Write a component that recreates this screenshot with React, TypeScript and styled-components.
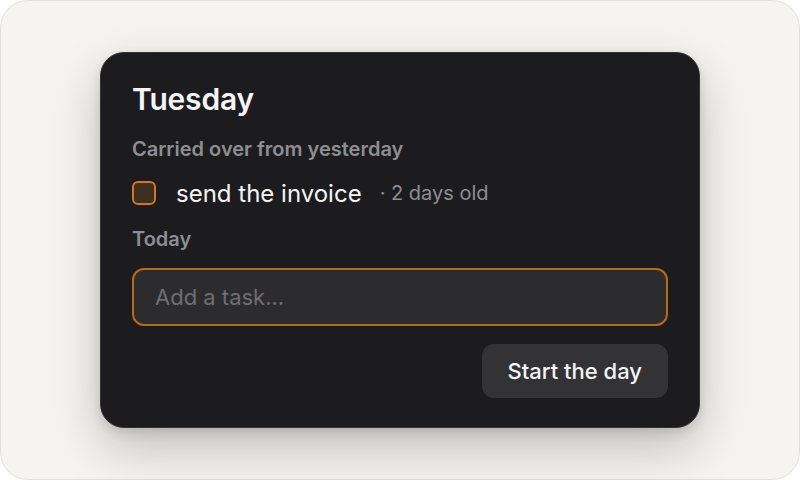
import React from "react";
import styled, { createGlobalStyle } from "styled-components";

const Global = createGlobalStyle`
  html, body { margin: 0; padding: 0; background: #ffffff; }
  body { font-family: Inter, "Noto Sans", sans-serif; -webkit-font-smoothing: antialiased; }
  * { box-sizing: border-box; }
`;

const Frame = styled.div`
  width: 800px;
  height: 480px;
  border: 1px solid #e2e0db;
  border-radius: 28px;
  background: #f5f4f0;
  display: flex;
  align-items: center;
  justify-content: center;
`;

const Card = styled.div`
  width: 600px;
  height: 376px;
  background: #1c1c1e;
  border: 1px solid #333335;
  border-radius: 24px;
  box-shadow: 0 20px 50px rgba(0, 0, 0, 0.22), 0 4px 12px rgba(0, 0, 0, 0.12);
  padding: 28px 31px 0 31px;
  display: flex;
  flex-direction: column;
`;

const Title = styled.h1`
  margin: 0;
  font-size: 30px;
  font-weight: 600;
  color: #f5f5f7;
  line-height: 36px;
  letter-spacing: -0.2px;
`;

const SectionLabel = styled.div<{ $top: number }>`
  margin-top: ${(p) => p.$top}px;
  font-size: 20px;
  font-weight: 600;
  color: #8e8e93;
  line-height: 24px;
`;

const TaskRow = styled.div`
  margin-top: 16px;
  display: flex;
  align-items: center;
  height: 32px;
`;

const Check = styled.span`
  width: 24px;
  height: 24px;
  border-radius: 6px;
  border: 2px solid #cf7a1e;
  background: #3f2f20;
  flex: none;
`;

const TaskText = styled.span`
  margin-left: 20px;
  font-size: 24px;
  color: #f5f5f7;
`;

const Age = styled.span`
  margin-left: 18px;
  font-size: 20px;
  color: #8e8e93;
`;

const Input = styled.input`
  margin-top: 17px;
  width: 100%;
  height: 58px;
  border-radius: 12px;
  border: 2px solid #b9681c;
  background: #2c2c2e;
  padding: 0 21px;
  font-family: Inter, "Noto Sans", sans-serif;
  font-size: 22px;
  color: #f5f5f7;
  outline: none;
  &::placeholder { color: #6e6e73; }
`;

const Footer = styled.div`
  margin-top: 18px;
  display: flex;
  justify-content: flex-end;
`;

const Button = styled.button`
  height: 54px;
  padding: 0 26px;
  border: none;
  border-radius: 12px;
  background: #333335;
  color: #f5f5f7;
  font-family: Inter, "Noto Sans", sans-serif;
  font-size: 22px;
  font-weight: 500;
`;

export default function App() {
  return (
    <>
      <Global />
      <Frame>
        <Card>
          <Title>Tuesday</Title>
          <SectionLabel $top={20}>Carried over from yesterday</SectionLabel>
          <TaskRow>
            <Check />
            <TaskText>send the invoice</TaskText>
            <Age>· 2 days old</Age>
          </TaskRow>
          <SectionLabel $top={18}>Today</SectionLabel>
          <Input placeholder="Add a task..." />
          <Footer>
            <Button>Start the day</Button>
          </Footer>
        </Card>
      </Frame>
    </>
  );
}
